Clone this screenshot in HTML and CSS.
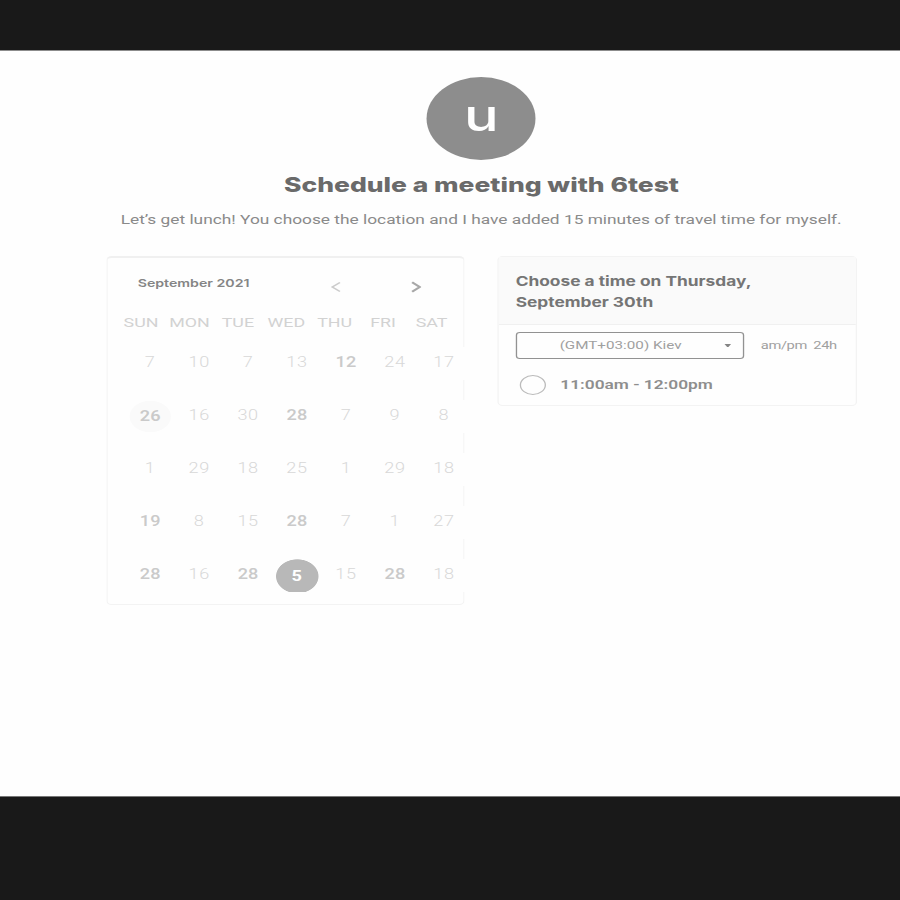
FILE: index.html
```
<!DOCTYPE html>
<html lang="en">
<head>
<meta charset="utf-8">
<title>Schedule a meeting</title>
<link rel="stylesheet" href="styles.css">
</head>
<body>
<div class="stage">
  <main class="page">
    <div class="avatar"><span>u</span></div>
    <h1 class="title">Schedule a meeting with 6test</h1>
    <p class="intro">Let’s get lunch! You choose the location and I have added 15 minutes of travel time for myself.</p>
    <div class="panels">
      <section class="card calendar">
        <header class="month">
          <span class="month-name">September 2021</span>
          <svg class="arrow prev" viewBox="0 0 8 12"><path d="M7 1.5 1.2 6 7 10.5"/></svg>
          <svg class="arrow next" viewBox="0 0 8 12"><path d="M1 1.2 6.8 6 1 10.8"/></svg>
        </header>
        <div class="weekdays"><span>SUN</span><span>MON</span><span>TUE</span><span>WED</span><span>THU</span><span>FRI</span><span>SAT</span></div>
        <div class="days">
          <span>7</span><span>10</span><span>7</span><span>13</span><b>12</b><span>24</span><span>17</span>
          <b class="today">26</b><span>16</span><span>30</span><b>28</b><span>7</span><span>9</span><span>8</span>
          <span>1</span><span>29</span><span>18</span><span>25</span><span>1</span><span>29</span><span>18</span>
          <b>19</b><span>8</span><span>15</span><b>28</b><span>7</span><span>1</span><span>27</span>
          <b>28</b><span>16</span><b>28</b><b class="selected">5</b><span>15</span><b>28</b><span>18</span>
        </div>
      </section>
      <section class="card times">
        <h2 class="times-title">Choose a time on Thursday,<br>September 30th</h2>
        <div class="zone-row">
          <div class="zone"><span>(GMT+03:00) Kiev</span><i class="caret"></i></div>
          <span class="format">am/pm</span><span class="format">24h</span>
        </div>
        <div class="slot"><i class="radio"></i><span>11:00am - 12:00pm</span></div>
      </section>
    </div>
  </main>
</div>
</body>
</html>
```
FILE: styles.css
```
* { box-sizing: border-box; }
body { margin: 0; height: 900px; overflow: hidden; background: #191919; }

/* The whole layout is widened horizontally by one factor. */
.stage {
  width: 685.714px;
  height: 900px;
  padding-top: 50px;
  transform: scaleX(1.3125);
  transform-origin: 0 0;
  font-family: Roboto, "Liberation Sans", sans-serif;
}
.page {
  height: 747px;
  padding: 26px 34px 0 81px;
  background: #fefefe;
  border-top: 1px solid #8c8c8c;
  border-bottom: 1px solid #777;
}
.avatar {
  width: 83px;
  height: 83px;
  margin: 0 auto;
  position: relative;
  left: .5px;
  border-radius: 50%;
  background: #8d8d8d;
  color: #fff;
  font: 500 44px/77px Inter, sans-serif;
  text-align: center;
}
.title {
  margin: 13px -10px 0 -9px;
  font: 800 20.15px/24px Inter, sans-serif;
  color: #6a6a6a;
  text-align: center;
  white-space: nowrap;
}
.intro {
  margin: 13px -10px 0 -9.5px;
  font-size: 13.2px;
  line-height: 20px;
  color: #8a8a8a;
  text-align: center;
  white-space: nowrap;
}
.panels { display: flex; gap: 25px; align-items: flex-start; margin-top: 26px; }
.card { flex: none; width: 273.4px; border: 1px solid #f3f3f3; border-radius: 4px; }

.calendar { height: 349px; border-top: 2px solid #f0f0f0; }
.month { display: flex; align-items: center; height: 52px; padding: 0 0 0 22.9px; }
.month-name { width: 147px; font: 600 10.8px/16px Inter, sans-serif; color: #858585; }
.arrow { width: 8px; height: 12px; fill: none; stroke-width: 1.5; margin-top: 6px; }
.prev { stroke: #ccc; }
.next { stroke: #a8a8a8; stroke-width: 1.9; margin-left: 53px; }
.weekdays {
  display: grid;
  grid-template-columns: repeat(7, 36.9px);
  padding-left: 7px;
  line-height: 24px;
  font-size: 13.6px;
  color: #d2d2d2;
  text-align: center;
}
.days {
  display: grid;
  grid-template-columns: repeat(7, 33px);
  grid-auto-rows: 33px;
  gap: 20px 4.3px;
  margin: 13px 0 0 15.7px;
  font-size: 13.8px;
  line-height: 31px;
  text-align: center;
}
.days > * { background: #fefefe; letter-spacing: .5px; margin-right: -.5px; }
.days > span { font-weight: 300; color: #d8d8d8; }
.days > b { font-weight: 500; color: #cacaca; letter-spacing: .1px; }
.days > .today { background: radial-gradient(circle 16px, #fafafa 96%, #fefefe); font-weight: 600; line-height: 33px; }
.days > .selected {
  margin: 0;
  background: radial-gradient(ellipse 16.5px 17.3px at 50% 17.3px, #b8b8b8 96%, #fefefe 100%);
  color: #fff;
  font-weight: 700;
  line-height: 34px;
}

.times { height: 150px; }
.times-title {
  height: 68px;
  margin: 0;
  padding: 14px 12.5px 0;
  border-bottom: 1px solid #f0f0f0;
  background: #fafafa;
  font: 700 13.2px/21px Inter, sans-serif;
  color: #757575;
  white-space: nowrap;
}
.zone-row { display: flex; align-items: center; height: 27px; margin: 7px 0 0 12.5px; color: #a0a0a0; }
.zone {
  display: flex;
  align-items: center;
  justify-content: space-between;
  width: 174px;
  height: 27px;
  padding: 0 9px 1px 32.5px;
  border: 1px solid #929292;
  border-radius: 3px;
  font-size: 11.6px;
}
.caret { width: 5px; border: 2.5px solid transparent; border-top: 3px solid #858585; border-bottom: 0; margin-top: 1px; }
.format { width: 34.6px; margin-left: 12.8px; margin-top: -1px; font-size: 11.2px; letter-spacing: -.3px; }
.format + .format { width: auto; margin-left: 5.4px; }
.slot { display: flex; align-items: center; margin: 15px 0 0 15.5px; height: 21px; font: 600 13.2px/20px Roboto, sans-serif; color: #8e8e8e; }
.radio { width: 20px; height: 20px; margin-right: 11px; border: 1px solid #bbb; border-radius: 50%; }
```
